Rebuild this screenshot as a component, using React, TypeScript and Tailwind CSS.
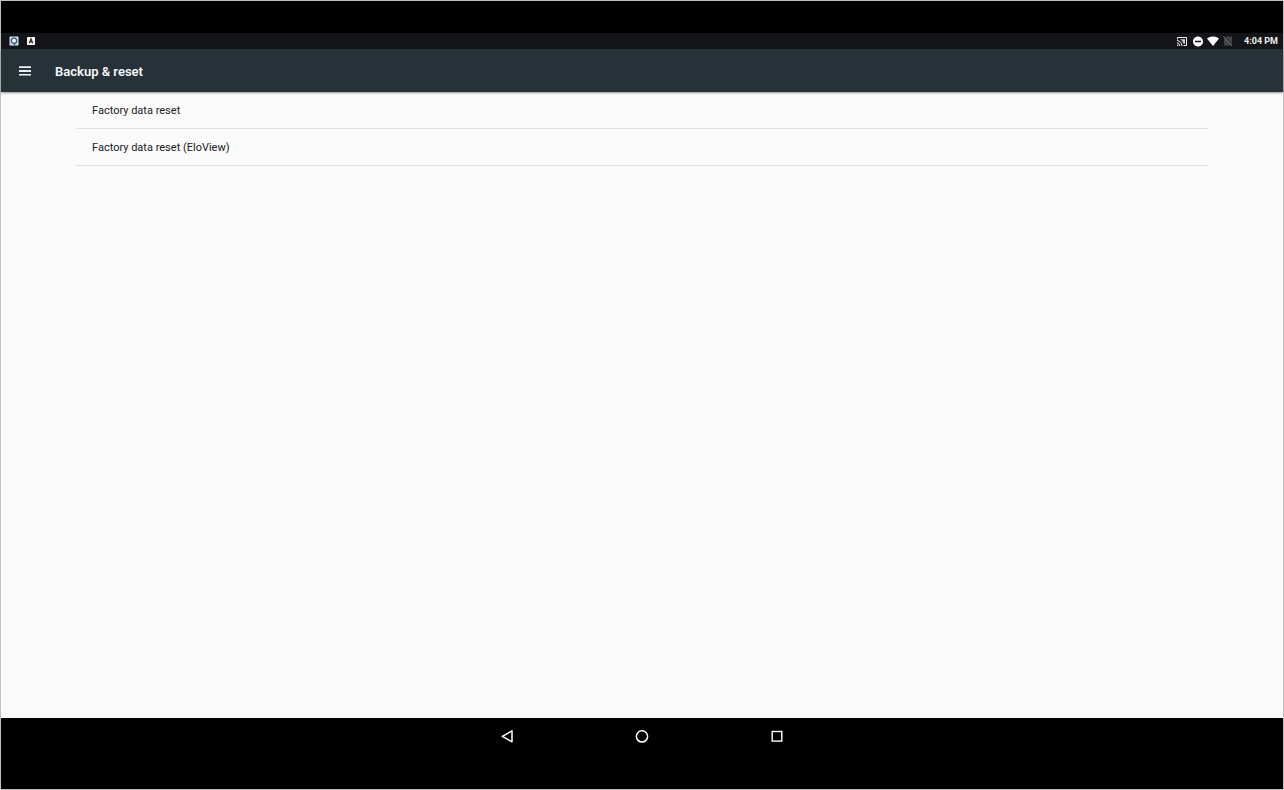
import React from 'react';

const settings = ['Factory data reset', 'Factory data reset (EloView)'];

function StatusBar() {
  return (
    <div className="flex h-4 items-center justify-between bg-[#141518] pl-2 pr-[5px]">
      <div className="flex items-center gap-[7px]">
        <svg viewBox="0 0 10 10" className="size-[10px]" aria-hidden="true">
          <rect x=".5" y=".5" width="9" height="9" rx=".5" fill="#d3e0e8" />
          <circle cx="5" cy="4.8" r="2.700" fill="#eef3f6" stroke="#2c6288" strokeWidth="1.300" />
          <path d="M4 7l1.500 2.200L7 7z" fill="#2c6288" />
        </svg>
        <svg viewBox="0 0 10 10" className="size-[10px]" aria-hidden="true">
          <rect x="1" y="1" width="8" height="8" rx=".5" fill="#f4f4f4" />
          <path d="M3.300 7.300L5 2.900l1.700 4.400M3.900 5.900h2.200" fill="none" stroke="#222" strokeWidth="1.100" />
        </svg>
      </div>
      <div className="flex items-center">
        <svg viewBox="0 0 12 12" className="mr-1 size-3" fill="none" stroke="#f2f2f2" strokeWidth="1" aria-hidden="true">
          <path d="M1.500 4.500V2.500h9v8H7.500" />
          <path d="M1 5.500Q5.500 6 6 11M1 7.700Q3.600 8 3.900 11" />
          <path d="M1 9.300L2.700 11H1z" fill="#f2f2f2" stroke="none" />
          <path d="M4 4.300h5v4.500H7.500Q6.800 5.300 4 4.300z" fill="#d0d0d0" stroke="none" />
        </svg>
        <svg viewBox="0 0 24 24" className="mr-[3px] size-3" fill="#ffffff" aria-hidden="true">
          <path d="M12 3C6.480 3 2 7.480 2 13s4.480 10 10 10 10-4.480 10-10S17.520 3 12 3zm6 11.500H6v-3h12v3z" />
        </svg>
        <svg viewBox="0 0 24 24" className="mr-[3px] size-3" fill="#ffffff" aria-hidden="true">
          <path d="M12 22L24 7C23.500 6.600 19 3 12 3S.5 6.600 0 7l12 15z" />
        </svg>
        <svg viewBox="0 0 24 24" className="mr-[10px] size-3" aria-hidden="true">
          <path d="M9 3L4 8v13h16V3z" fill="#424346" />
          <path d="M5 3l17 19" stroke="#202124" strokeWidth="2" />
          <path d="M3 3l17 19" stroke="#77787a" strokeWidth="2" />
        </svg>
        <time className="text-[9px] leading-4 font-bold text-[#eeeeee]">4:04 PM</time>
      </div>
    </div>
  );
}

function AppBar() {
  return (
    <header className="relative flex h-[43px] items-center bg-[#263238] pl-[17px] text-[#f5f7f8] shadow-[0_1px_2px_rgba(0,0,0,0.4)]">
      <button type="button" aria-label="Open menu" className="mr-[23px] flex">
        <svg viewBox="0 0 14 14" className="size-[14px]" fill="#eef1f2" aria-hidden="true">
          <path d="M1 2.200h12v1.800H1zM1 6.100h12v1.800H1zM1 10h12v1.600H1z" />
        </svg>
      </button>
      <h1 className="pt-0.5 text-[13px] leading-5 font-semibold">Backup &amp; reset</h1>
    </header>
  );
}

function NavigationBar() {
  return (
    <nav className="flex h-[71px] items-start justify-center gap-[119px] bg-black pt-[10px]">
      <button type="button" aria-label="Back">
        <svg viewBox="0 0 16 16" className="size-4" fill="none" stroke="#fff" strokeWidth="1.500" strokeLinejoin="round" aria-hidden="true">
          <path d="M13 2.900v10.900L3.300 8.400z" />
        </svg>
      </button>
      <button type="button" aria-label="Home">
        <svg viewBox="0 0 16 16" className="size-4" fill="none" stroke="#fff" strokeWidth="1.500" aria-hidden="true">
          <circle cx="8" cy="8.400" r="5.600" />
        </svg>
      </button>
      <button type="button" aria-label="Recent apps">
        <svg viewBox="0 0 16 16" className="size-4" fill="none" stroke="#fff" strokeWidth="1.400" aria-hidden="true">
          <rect x="3.200" y="3.500" width="9.600" height="9.600" />
        </svg>
      </button>
    </nav>
  );
}

export default function App() {
  return (
    <div className="flex min-h-screen flex-col border border-[#bfc0c0] bg-[#fafafa] font-[Roboto,sans-serif]">
      <div className="h-8 bg-black" />
      <StatusBar />
      <AppBar />
      <main className="grow px-[75px]">
        <ul>
          {settings.map((label) => (
            <li key={label} className="border-b border-[#e0e0e0]">
              <button type="button" className="block h-9 w-full px-4 pt-0.5 text-left text-[11px] text-[#212121]">
                {label}
              </button>
            </li>
          ))}
        </ul>
      </main>
      <NavigationBar />
    </div>
  );
}
